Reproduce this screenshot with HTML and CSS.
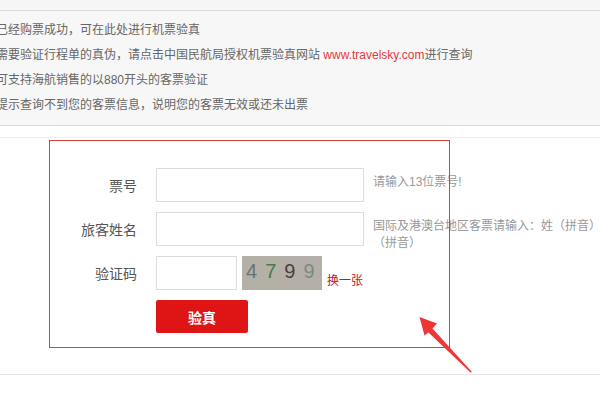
FILE: index.html
```html
<!DOCTYPE html>
<html lang="zh-CN">
<head>
<meta charset="utf-8">
<title>机票验真</title>
<link rel="stylesheet" href="styles.css">
</head>
<body>
<div class="topbar"></div>
<div class="notice">
  <p>已经购票成功，可在此处进行机票验真</p>
  <p>需要验证行程单的真伪，请点击中国民航局授权机票验真网站 <a class="link" href="#">www.travelsky.com</a>进行查询</p>
  <p>可支持海航销售的以880开头的客票验证</p>
  <p>提示查询不到您的客票信息，说明您的客票无效或还未出票</p>
</div>
<div class="divider"></div>
<form class="verify">
  <div class="row">
    <label class="label">票号</label>
    <input class="field" type="text">
    <span class="hint">请输入13位票号!</span>
  </div>
  <div class="row">
    <label class="label">旅客姓名</label>
    <input class="field" type="text">
    <span class="hint">国际及港澳台地区客票请输入：姓（拼音）<br>（拼音）</span>
  </div>
  <div class="row">
    <label class="label">验证码</label>
    <input class="field field-short" type="text">
    <div class="captcha"><span class="d1">4</span><span class="d2">7</span><span class="d3">9</span><span class="d4">9</span></div>
    <a class="refresh" href="#">换一张</a>
  </div>
  <div class="row">
    <span class="label"></span>
    <button class="submit" type="button">验真</button>
  </div>
</form>
<div class="footer-line"></div>

<div class="annot-box"></div>
<svg class="annot-arrow" width="600" height="400" viewBox="0 0 600 400">
  <polygon points="419.5,317 437,323.5 432.5,328.5 472,372 470.5,372.5 428.5,332.5 424.5,335.5" fill="#ef3636"/>
</svg>
</body>
</html>
```

FILE: styles.css
```css
html, body {
  margin: 0;
  padding: 0;
}
body {
  width: 600px;
  height: 400px;
  overflow: hidden;
  background: #fff;
  font-family: "Liberation Sans", "Noto Sans CJK SC", sans-serif;
  color: #666;
  position: relative;
}
.topbar {
  height: 10px;
  background: #f6f6f6;
}
.notice {
  background: #f7f7f7;
  border-top: 1px solid #dcdcdc;
  border-bottom: 1px solid #dcdcdc;
  padding: 7px 0 7px 0;
  margin-left: -4px;
}
.notice p {
  margin: 0;
  font-size: 12px;
  line-height: 25px;
  white-space: nowrap;
  color: #666;
}
.link {
  color: #e4393c;
  text-decoration: none;
}
.divider {
  margin-top: 11px;
  height: 1px;
  background: #efefef;
}
.verify {
  padding: 30px 0 40px 0;
  display: flex;
  flex-direction: column;
  gap: 10px;
}
.row {
  display: flex;
  align-items: center;
  height: 34px;
}
.label {
  width: 137px;
  margin-right: 19px;
  text-align: right;
  font-size: 14px;
  color: #555;
  flex: none;
}
.field {
  box-sizing: border-box;
  width: 208px;
  height: 34px;
  border: 1px solid #dcdcdc;
  margin: 0;
  padding: 0 6px;
  background: #fff;
  flex: none;
}
.field-short {
  width: 81px;
}
.hint {
  align-self: flex-start;
  margin-left: 9px;
  padding-top: 6px;
  font-size: 12px;
  line-height: 17px;
  color: #999;
  white-space: nowrap;
}
.captcha {
  box-sizing: border-box;
  width: 80px;
  height: 34px;
  margin-left: 5px;
  background: #b4b0a7;
  display: flex;
  align-items: center;
  padding: 0 0 5px 4px;
  gap: 8px;
  font-size: 20px;
  line-height: 20px;
  font-family: "Liberation Sans", sans-serif;
  overflow: hidden;
  flex: none;
}
.d1 { color: #637574; }
.d2 { color: #3f7f45; }
.d3 { color: #4c3f40; }
.d4 { color: #7b8b80; }
.refresh {
  align-self: flex-end;
  margin-left: 5px;
  font-size: 12px;
  line-height: 16px;
  color: #c8101e;
  text-decoration: none;
  margin-bottom: 1px;
}
.submit {
  width: 92px;
  height: 33px;
  border: 0;
  border-radius: 2px;
  background: #df1515;
  color: #fff;
  font-size: 14px;
  font-weight: bold;
  font-family: "Liberation Sans", "Noto Sans CJK SC", sans-serif;
  margin-top: -1px;
  padding: 0;
  flex: none;
}
.footer-line {
  height: 1px;
  background: #e6e6e6;
}
.annot-box {
  position: absolute;
  left: 49px;
  top: 140px;
  width: 399px;
  height: 206px;
  border: 1px solid #d8403c;
  pointer-events: none;
}
.annot-arrow {
  position: absolute;
  left: 0;
  top: 0;
  pointer-events: none;
}
```
